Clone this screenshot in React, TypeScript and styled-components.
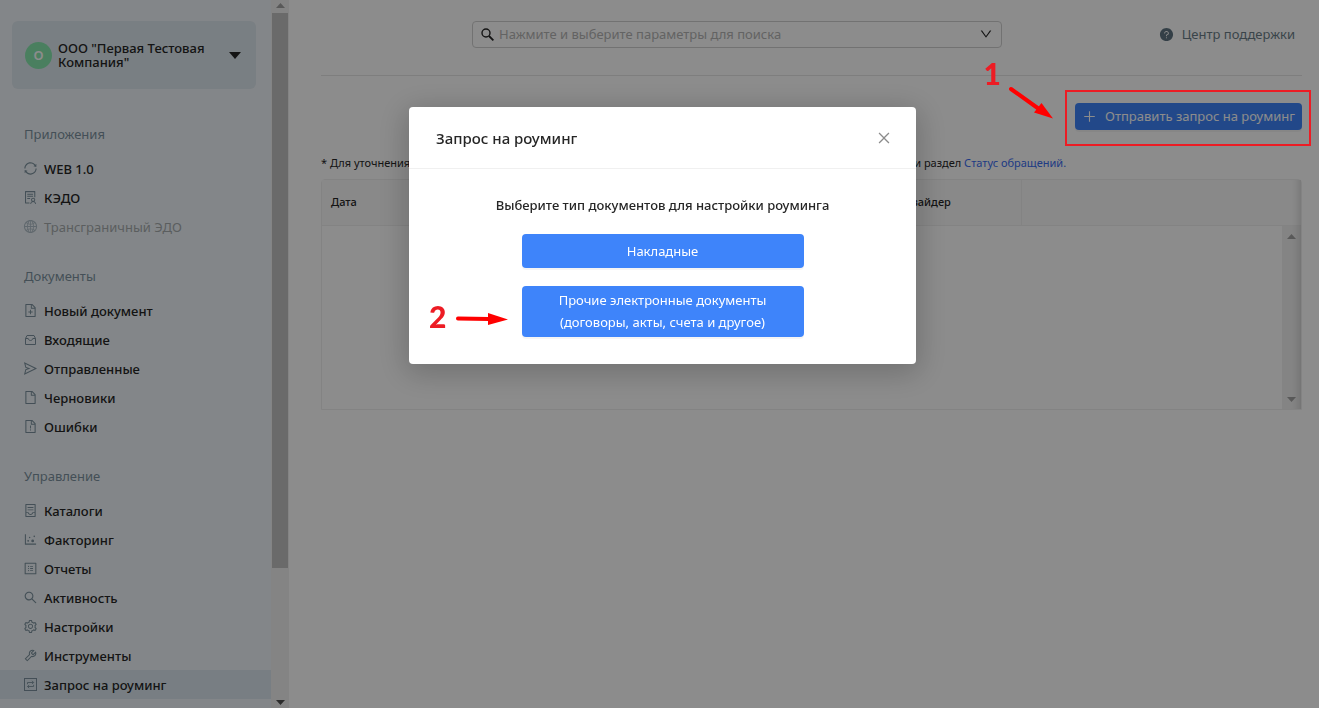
import React from "react";
import styled, { createGlobalStyle, css } from "styled-components";
import {
  AiFillQuestionCircle,
  AiOutlineClose,
  AiOutlineContainer,
  AiOutlineDotChart,
  AiOutlineDown,
  AiOutlineFile,
  AiOutlineFileAdd,
  AiOutlineFileExclamation,
  AiOutlineGlobal,
  AiOutlinePlus,
  AiOutlineProfile,
  AiOutlineSearch,
  AiOutlineSend,
  AiOutlineSetting,
  AiOutlineSolution,
  AiOutlineSync,
  AiOutlineTool,
} from "react-icons/ai";

const GlobalStyle = createGlobalStyle`
  *, *::before, *::after { box-sizing: border-box; }
  body {
    margin: 0;
    background: #fff;
    color: #262626;
    font-family: "Noto Sans", "Open Sans", sans-serif;
    font-size: 13px;
    line-height: 22px;
  }
  button, input { font: inherit; color: inherit; }
  a { text-decoration: none; color: inherit; }
  svg { display: block; flex: none; }
`;

const Page = styled.div`
  display: flex;
  height: 100vh;
  overflow: hidden;
`;

const Sidebar = styled.aside`
  flex: 0 0 271px;
  padding-top: 21px;
  background: #eff5f9;
  overflow: hidden;
`;

const CompanyButton = styled.button`
  display: flex;
  align-items: center;
  gap: 6px;
  width: 244px;
  height: 68px;
  margin: 0 0 32px 12px;
  padding: 0 15px 0 13px;
  border: 0;
  border-radius: 6px;
  background: #dde7ee;
  text-align: left;
`;

const Avatar = styled.span`
  display: grid;
  place-items: center;
  flex: 0 0 27px;
  height: 27px;
  border-radius: 50%;
  background: #87e8ae;
  color: #fff;
  font-weight: 600;
`;

const CompanyName = styled.span`
  flex: 1;
  font-weight: 500;
  line-height: 14px;
  white-space: nowrap;
`;

const Group = styled.section`
  margin-bottom: 22px;
`;

const GroupTitle = styled.h2`
  margin: 0 0 6px 24px;
  color: #7c919e;
  font-size: 13px;
  font-weight: 400;
  line-height: 27px;
`;

const MenuLink = styled.a<{ $active?: boolean; $muted?: boolean }>`
  display: flex;
  align-items: center;
  gap: 6px;
  height: 29px;
  padding-left: 23px;
  font-weight: 500;
  svg { color: #7c919e; }
  ${(p) => p.$active && css`background: #dae6ef;`}
  ${(p) => p.$muted && css`
    color: #a6abae;
    font-weight: 400;
    svg { color: #b0bec8; }
  `}
`;

const Scrollbar = styled.div<{ $width: number }>`
  display: flex;
  flex-direction: column;
  align-items: center;
  justify-content: space-between;
  flex: 0 0 ${(p) => p.$width}px;
  padding: 3px 0;
  background: #f1f1f1;
`;

const Thumb = styled.div`
  width: 16px;
  height: 555px;
  margin: 5px 0 auto;
  background: #c1c1c1;
`;

const Main = styled.main`
  flex: 1;
  min-width: 0;
  padding: 0 17px 0 32px;
`;

const Header = styled.header`
  display: flex;
  align-items: center;
  height: 76px;
  padding: 0 7px 7px 151px;
  border-bottom: 1px solid #e6e6e6;
`;

const SearchBox = styled.label`
  display: flex;
  align-items: center;
  gap: 5px;
  flex: 1;
  height: 27px;
  padding: 0 8px;
  border: 1px solid #d0d0d0;
  border-radius: 4px;
`;

const SearchInput = styled.input`
  flex: 1;
  min-width: 0;
  padding: 0;
  border: 0;
  outline: 0;
  background: none;
  &::placeholder { color: #b4b4b4; opacity: 1; }
`;

const IconButton = styled.button`
  display: grid;
  place-items: center;
  padding: 0;
  border: 0;
  background: none;
`;

const SupportLink = styled.a`
  display: flex;
  align-items: center;
  gap: 8px;
  margin-left: 157px;
  color: #6b7d88;
  svg { color: #5f7481; }
`;

const Actions = styled.div`
  display: flex;
  justify-content: flex-end;
  padding: 27px 0 22px;
`;

const PrimaryButton = styled.button<{ $block?: boolean }>`
  display: flex;
  align-items: center;
  justify-content: center;
  gap: 8px;
  min-height: ${(p) => (p.$block ? 34 : 27)}px;
  width: ${(p) => (p.$block ? "282px" : "227px")};
  padding: ${(p) => (p.$block ? "3px 12px 4px" : "0 6px 1px")};
  border: 0;
  border-radius: 4px;
  background: #3e84fa;
  box-shadow: 0 2px 0 rgba(0, 0, 0, 0.04);
  color: #fff;
  white-space: nowrap;
`;

const Note = styled.p`
  display: flex;
  gap: 4px;
  margin: 0 0 5px;
  font-size: 11px;
  white-space: nowrap;
  a { color: #3a6cf0; }
`;

const NoteMiddle = styled.span`
  width: 496px;
  overflow: hidden;
`;

const TableFrame = styled.div`
  position: relative;
  border: 1px solid #efefef;
  border-radius: 4px 4px 0 0;
  &::after {
    content: "";
    position: absolute;
    inset: 0;
    box-shadow: inset -10px 0 8px -8px rgba(0, 0, 0, 0.16);
    pointer-events: none;
  }
`;

const Table = styled.table`
  width: 100%;
  border-collapse: collapse;
  table-layout: fixed;
  background: #fafafa;
`;

const Th = styled.th<{ $width?: number; $line?: boolean }>`
  width: ${(p) => (p.$width ? `${p.$width}px` : "auto")};
  height: 45px;
  padding: 0 9px;
  border-bottom: 1px solid #efefef;
  border-right: ${(p) => (p.$line ? "1px solid #efefef" : "0")};
  font-size: 11px;
  font-weight: 500;
  text-align: left;
`;

const TableBody = styled.div`
  display: flex;
  justify-content: flex-end;
  height: 183px;
  ${Scrollbar} { padding: 8px 0 7px; }
`;

const Mask = styled.div`
  position: fixed;
  inset: 0;
  display: flex;
  justify-content: center;
  align-items: flex-start;
  padding: 107px 0 0 6px;
  background: rgba(0, 0, 0, 0.45);
`;

const Dialog = styled.div`
  position: relative;
  width: 507px;
  border-radius: 4px;
  background: #fff;
  box-shadow: 0 6px 30px 4px rgba(0, 0, 0, 0.2);
`;

const DialogHeader = styled.div`
  display: flex;
  align-items: center;
  justify-content: space-between;
  height: 62px;
  padding: 0 24px 0 27px;
  border-bottom: 1px solid #f0f0f0;
  ${IconButton} { color: #8c8c8c; }
`;

const DialogTitle = styled.h1`
  margin: 0;
  font-size: 15px;
  font-weight: 500;
`;

const DialogBody = styled.div`
  display: flex;
  flex-direction: column;
  align-items: center;
  gap: 18px;
  padding: 25px 0 27px;
`;

const DialogText = styled.p`
  margin: 0;
  font-weight: 500;
`;

const Callout = styled.div`
  position: fixed;
  top: 90px;
  right: 8px;
  width: 246px;
  height: 56px;
  border: 2px solid #ed1c24;
`;

const Digit = styled.span`
  position: absolute;
  color: #ed1c24;
  font-family: Lato, sans-serif;
  font-size: 30px;
  font-weight: 900;
  line-height: 30px;
`;

const FirstDigit = styled(Digit)`
  top: -34px;
  right: 308px;
`;

const SecondDigit = styled(Digit)`
  top: 194px;
  left: 20px;
`;

const FirstArrow = styled.svg`
  position: absolute;
  top: -8px;
  right: 254px;
`;

const SecondArrow = styled.svg`
  position: absolute;
  top: 204px;
  left: 46px;
`;

const RoamingIcon = () => (
  <svg width="15" height="15" viewBox="0 0 15 15" fill="none" stroke="currentColor" aria-hidden="true">
    <rect x="1.5" y="1.5" width="12" height="12" />
    <path d="M4.5 7.2V5.5h6M9 3.8l1.6 1.7L9 7.1M10.6 7.8v1.7h-6M6.2 8 4.5 9.5 6.2 11.1" strokeWidth=".9" />
  </svg>
);

const InboxIcon = () => (
  <svg width="15" height="15" viewBox="0 0 15 15" fill="none" stroke="currentColor" strokeLinejoin="round" aria-hidden="true">
    <path d="M2.500 6.500 4 3.500h7l1.500 3v6h-10z" />
    <path d="M2.500 6.500h2.700c.3 1.300 1.100 2 2.300 2s2-.7 2.300-2h2.700" />
  </svg>
);

const Triangle = ({ up, color = "#505050", wide }: { up?: boolean; color?: string; wide?: boolean }) => (
  <svg width={wide ? 12 : 9} height={wide ? 7 : 5} viewBox="0 0 12 7" preserveAspectRatio="none" fill={color} aria-hidden="true">
    <path d={up ? "M0 7 6 0l6 7z" : "M0 0h12L6 7z"} />
  </svg>
);

type Item = { label: string; icon: React.ReactNode; active?: boolean; muted?: boolean };

const groups: { title: string; items: Item[] }[] = [
  {
    title: "Приложения",
    items: [
      { label: "WEB 1.0", icon: <AiOutlineSync size={15} /> },
      { label: "КЭДО", icon: <AiOutlineSolution size={15} /> },
      { label: "Трансграничный ЭДО", icon: <AiOutlineGlobal size={15} />, muted: true },
    ],
  },
  {
    title: "Документы",
    items: [
      { label: "Новый документ", icon: <AiOutlineFileAdd size={15} /> },
      { label: "Входящие", icon: <InboxIcon /> },
      { label: "Отправленные", icon: <AiOutlineSend size={15} /> },
      { label: "Черновики", icon: <AiOutlineFile size={15} /> },
      { label: "Ошибки", icon: <AiOutlineFileExclamation size={15} /> },
    ],
  },
  {
    title: "Управление",
    items: [
      { label: "Каталоги", icon: <AiOutlineContainer size={15} /> },
      { label: "Факторинг", icon: <AiOutlineDotChart size={15} /> },
      { label: "Отчеты", icon: <AiOutlineProfile size={15} /> },
      { label: "Активность", icon: <AiOutlineSearch size={15} /> },
      { label: "Настройки", icon: <AiOutlineSetting size={15} /> },
      { label: "Инструменты", icon: <AiOutlineTool size={15} /> },
      { label: "Запрос на роуминг", icon: <RoamingIcon />, active: true },
    ],
  },
];

export default function App() {
  return (
    <>
      <GlobalStyle />
      <Page>
        <Sidebar>
          <CompanyButton type="button">
            <Avatar>О</Avatar>
            <CompanyName>
              ООО "Первая Тестовая
              <br />
              Компания"
            </CompanyName>
            <Triangle wide color="#262626" />
          </CompanyButton>
          <nav>
            {groups.map((group) => (
              <Group key={group.title}>
                <GroupTitle>{group.title}</GroupTitle>
                {group.items.map((item) => (
                  <MenuLink key={item.label} href="#" $active={item.active} $muted={item.muted}>
                    {item.icon}
                    {item.label}
                  </MenuLink>
                ))}
              </Group>
            ))}
          </nav>
        </Sidebar>
        <Scrollbar $width={18}>
          <Triangle up color="#a3a3a3" />
          <Thumb />
          <Triangle />
        </Scrollbar>
        <Main>
          <Header>
            <SearchBox>
              <svg width="13" height="13" viewBox="0 0 13 13" fill="none" stroke="currentColor" strokeWidth="1.4" aria-hidden="true">
                <circle cx="5" cy="5" r="4" />
                <path d="m8 8 4.4 4.4" strokeWidth="1.8" />
              </svg>
              <SearchInput aria-label="Поиск" placeholder="Нажмите и выберите параметры для поиска" />
              <IconButton type="button" aria-label="Параметры">
                <AiOutlineDown size={14} />
              </IconButton>
            </SearchBox>
            <SupportLink href="#">
              <AiFillQuestionCircle size={15} />
              Центр поддержки
            </SupportLink>
          </Header>
          <Actions>
            <PrimaryButton type="button">
              <AiOutlinePlus size={15} />
              Отправить запрос на роуминг
            </PrimaryButton>
          </Actions>
          <Note>
            <span>* Для уточнения</span>
            <NoteMiddle>статуса</NoteMiddle>
            <span>
              и раздел <a href="#">Статус обращений.</a>
            </span>
          </Note>
          <TableFrame>
            <Table>
              <thead>
                <tr>
                  <Th $width={559}>Дата</Th>
                  <Th $width={140} $line>Провайдер</Th>
                  <Th />
                </tr>
              </thead>
            </Table>
            <TableBody>
              <Scrollbar $width={19}>
                <Triangle up color="#a3a3a3" />
                <Triangle color="#a3a3a3" />
              </Scrollbar>
            </TableBody>
          </TableFrame>
        </Main>
      </Page>
      <Mask>
        <Dialog role="dialog" aria-labelledby="dialog-title">
          <DialogHeader>
            <DialogTitle id="dialog-title">Запрос на роуминг</DialogTitle>
            <IconButton type="button" aria-label="Закрыть">
              <AiOutlineClose size={16} />
            </IconButton>
          </DialogHeader>
          <DialogBody>
            <DialogText>Выберите тип документов для настройки роуминга</DialogText>
            <PrimaryButton type="button" $block>Накладные</PrimaryButton>
            <PrimaryButton type="button" $block>
              Прочие электронные документы
              <br />
              (договоры, акты, счета и другое)
            </PrimaryButton>
          </DialogBody>
          <SecondDigit>2</SecondDigit>
          <SecondArrow width="54" height="16" viewBox="0 0 54 16" aria-hidden="true">
            <path d="M3 7.5 34 8" stroke="#f00" strokeWidth="4" strokeLinecap="round" />
            <path d="M33 2v12l20-5.5z" fill="#f00" />
          </SecondArrow>
        </Dialog>
      </Mask>
      <Callout>
        <FirstDigit>1</FirstDigit>
        <FirstArrow width="48" height="36" viewBox="0 0 48 36" aria-hidden="true">
          <path d="M4 5 32 25" stroke="#f00" strokeWidth="4" strokeLinecap="round" />
          <path d="M27 28.5 34.5 19 46 34.5z" fill="#f00" />
        </FirstArrow>
      </Callout>
    </>
  );
}
